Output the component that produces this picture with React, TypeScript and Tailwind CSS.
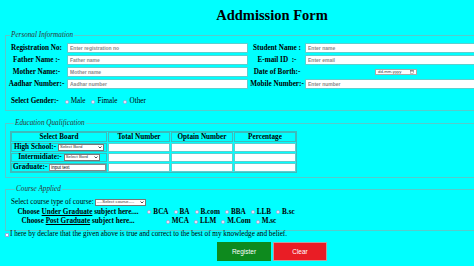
import React from 'react';

const personalRows = [
  { left: 'Registration No:', leftPh: 'Enter registration no', right: 'Student Name :', rightPh: 'Enter name' },
  { left: 'Father Name :-', leftPh: 'Father name', right: 'E-mail ID  :-', rightPh: 'Enter email' },
  { left: 'Mother Name:-', leftPh: 'Mother name', right: 'Date of Borth:-', rightPh: '' },
  { left: 'Aadhar Number:-', leftPh: 'Aadhar number', right: 'Mobile Number:-', rightPh: 'Enter number' },
];

const ugCourses = ['BCA', 'BA', 'B.com', 'BBA', 'LLB', 'B.sc'];
const pgCourses = ['MCA', 'LLM', 'M.Com', 'M.sc'];

const TextBox = ({ placeholder }: { placeholder?: string }) => (
  <input
    type="text"
    placeholder={placeholder}
    className="block w-full h-full bg-white border border-[#5ccfcf] px-[2px] text-[5px] text-[#222] font-['Liberation_Sans',sans-serif] placeholder:text-[#8a8a8a] outline-none"
  />
);

const Radio = ({ name, label }: { name: string; label: string }) => (
  <label className="inline-flex items-center gap-[2px]">
    <input
      type="radio"
      name={name}
      className="appearance-none w-[4px] h-[4px] rounded-full bg-white border-[0.5px] border-[#9ad]"
    />
    <span>{label}</span>
  </label>
);

const FakeSelect = ({ text, width }: { text: string; width: string }) => (
  <div
    className={`${width} h-[6.5px] bg-white border-[0.5px] border-[#777] flex items-center justify-between px-[1px] text-[4.3px] text-[#333] font-['Liberation_Sans',sans-serif] font-normal`}
  >
    <span className="whitespace-nowrap leading-none">{text}</span>
    <svg width="4" height="3" viewBox="0 0 8 6">
      <path d="M1 1l3 3 3-3" fill="none" stroke="#222" strokeWidth="1.6" />
    </svg>
  </div>
);

export default function App() {
  return (
    <div className="w-[474px] h-[266px] overflow-hidden bg-[#00ffff] text-black font-['Liberation_Serif',serif] text-[7.2px]">
      <div className="w-[544px] px-[5px]">
        {/* title */}
        <div className="h-[31px] flex items-center justify-center">
          <h1 className="text-[14.5px] font-bold leading-none">Addmission Form</h1>
        </div>

        {/* personal information */}
        <fieldset className="border border-[#55cccc] pt-[4px] pb-[4px]">
          <legend className="ml-[4px] px-[1px] italic leading-[8px] text-[#333]">Personal Information</legend>
          <div className="grid grid-cols-[61px_182px_56px_182px] auto-rows-[10px] gap-y-[2px] font-bold">
            {personalRows.map((row) => (
              <React.Fragment key={row.left}>
                <div className="flex items-center justify-center whitespace-pre">{row.left}</div>
                <div className="w-[181px]">
                  <TextBox placeholder={row.leftPh} />
                </div>
                <div className="flex items-center justify-center whitespace-pre">{row.right}</div>
                {row.rightPh ? (
                  <div>
                    <TextBox placeholder={row.rightPh} />
                  </div>
                ) : (
                  <div className="flex items-center justify-center">
                    <div className="w-[42px] h-[6px] bg-white border-[0.5px] border-[#aaa] flex items-center justify-between px-[2px] text-[4.3px] font-normal text-[#444] font-['Liberation_Sans',sans-serif]">
                      <span className="leading-none">dd-mm-yyyy</span>
                      <svg width="4" height="4" viewBox="0 0 8 8">
                        <rect x="0.5" y="1" width="7" height="6.5" fill="none" stroke="#666" strokeWidth="0.8" />
                        <rect x="0.5" y="1" width="7" height="1.8" fill="#666" />
                      </svg>
                    </div>
                  </div>
                )}
              </React.Fragment>
            ))}
          </div>
          <div className="mt-[8px] h-[9px] pl-[5px] flex items-center gap-[6px]">
            <span className="font-bold">Select Gender:-</span>
            <Radio name="gender" label="Male" />
            <Radio name="gender" label="Fimale" />
            <Radio name="gender" label="Other" />
          </div>
        </fieldset>

        {/* education */}
        <fieldset className="mt-[8px] border border-[#55cccc] pt-[4px] pb-[4px] pl-[4px]">
          <legend className="ml-[4px] px-[1px] italic leading-[8px] text-[#333]">Education Qualification</legend>
          <div className="w-[287px] border border-[#3cbcbc] grid grid-cols-[96px_62px_62px_62px] grid-rows-[10px_9px_9px_9px] gap-[1px] font-bold">
            {['Select Board', 'Total Number', 'Optain Number', 'Percentage'].map((h) => (
              <div key={h} className="border border-[#3cbcbc] flex items-center justify-center">
                {h}
              </div>
            ))}

            <div className="border border-[#3cbcbc] flex items-center justify-center gap-[2px]">
              <span>High School:-</span>
              <FakeSelect text="Select Bord" width="w-[46px]" />
            </div>
            <TextBox />
            <TextBox />
            <TextBox />

            <div className="border border-[#3cbcbc] flex items-center justify-center gap-[2px]">
              <span>Intermidiate:-</span>
              <FakeSelect text="Select Bord" width="w-[36px]" />
            </div>
            <TextBox />
            <TextBox />
            <TextBox />

            <div className="border border-[#3cbcbc] flex items-center gap-[2px] pl-[1px]">
              <span>Graduate:-</span>
              <div className="flex-1 h-[7px]">
                <input
                  type="text"
                  defaultValue="input text"
                  className="block w-full h-full bg-white border-[0.5px] border-[#888] px-[1px] text-[4.5px] font-normal font-['Liberation_Sans',sans-serif] outline-none"
                />
              </div>
            </div>
            <TextBox />
            <TextBox />
            <TextBox />
          </div>
        </fieldset>

        {/* course */}
        <fieldset className="mt-[7px] border border-[#55cccc] pt-[5px] pb-[4px] pl-[5px]">
          <legend className="ml-[4px] px-[1px] italic leading-[8px] text-[#333]">Course Applied</legend>
          <div className="h-[9px] flex items-center gap-[1px]">
            <span>Select course type of course:</span>
            <FakeSelect text="----Select course----" width="w-[51px]" />
          </div>
          <div className="grid grid-cols-[134px_152px] grid-rows-[10px_9px] font-bold">
            <div className="flex items-center justify-center">
              <span>
                Choose <u>Under Graduate</u> subject here....
              </span>
            </div>
            <div className="flex items-center justify-center gap-[5px]">
              {ugCourses.map((c) => (
                <Radio key={c} name="ug" label={c} />
              ))}
            </div>
            <div className="flex items-center justify-center">
              <span>
                Choose <u>Post Graduate</u> subject here...
              </span>
            </div>
            <div className="flex items-center justify-center gap-[5px]">
              {pgCourses.map((c) => (
                <Radio key={c} name="pg" label={c} />
              ))}
            </div>
          </div>
        </fieldset>

        {/* declaration */}
        <label className="h-[7px] flex items-center gap-[1px]">
          <input
            type="checkbox"
            className="appearance-none w-[4px] h-[4px] bg-white border-[0.5px] border-[#9ad] rounded-[0.5px]"
          />
          <span className="leading-none">
            I here by declare that the given above is true and correct to the best of my knowledge and belief.
          </span>
        </label>

        {/* buttons */}
        <div className="mt-[4px] flex justify-center gap-[2px]">
          <button className="w-[54px] h-[19px] bg-[#0e8a1e] text-white text-[6.5px] font-['Liberation_Sans',sans-serif]">
            Register
          </button>
          <button className="w-[54px] h-[19px] bg-[#e91d25] border border-[#b9a0a0] text-white text-[6.5px] font-['Liberation_Sans',sans-serif]">
            Clear
          </button>
        </div>
      </div>
    </div>
  );
}
